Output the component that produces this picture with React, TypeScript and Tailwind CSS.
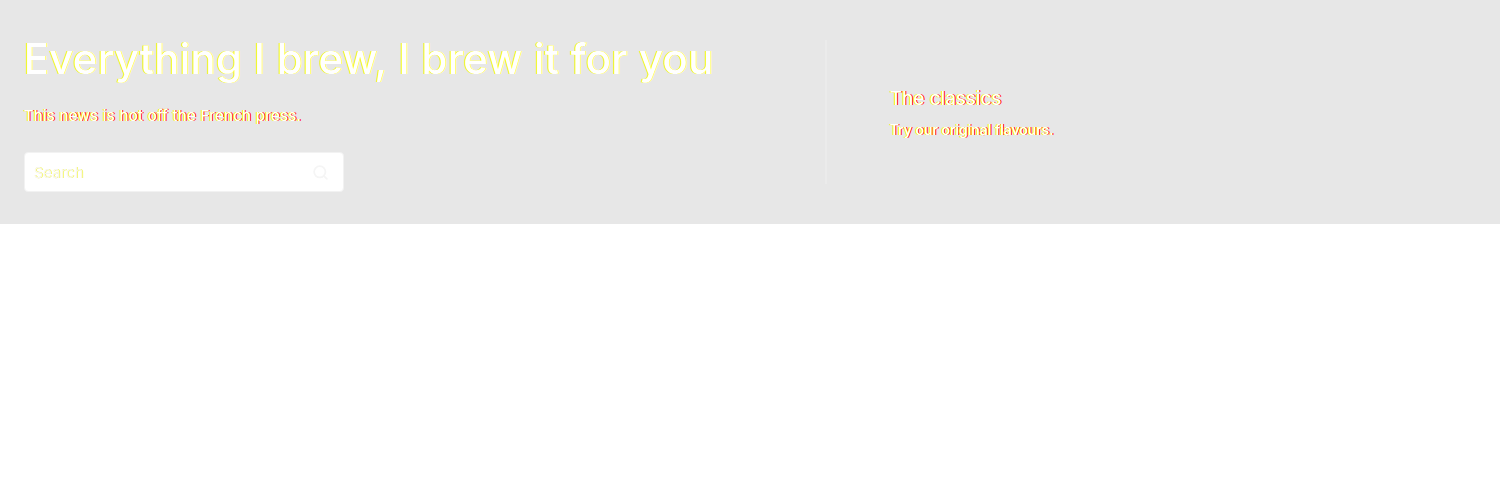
import { Search } from 'lucide-react';

export default function App() {
  return (
    <div className="min-h-[500px] bg-white font-['Inter',sans-serif]">
      <section className="flex h-[224px] bg-[#e7e7e7] px-6 pt-10">
        {/* Left: heading and search */}
        <div className="w-[801px] shrink-0">
          <h1 className="text-[42px] leading-[38px] font-medium tracking-[0.2px] text-white [text-shadow:-1px_0_0_#ffff00,0.5px_0_0_#ffff00]">
            Everything I brew, I brew it for you
          </h1>
          <p className="mt-[28px] text-[15px] leading-5 tracking-[0.3px] text-white [text-shadow:-1px_0_0_#ffff00,1px_0_0_#ff0000]">
            This news is hot off the French press.
          </p>
          <div className="mt-[26px] flex h-10 w-80 items-center justify-between rounded-sm border border-[#f2f2f2] bg-white pr-[14px] pl-[9px]">
            <span className="pt-0.5 text-[15px] text-[#f4f4f4] [text-shadow:0.5px_0_0_#ffff00]">Search</span>
            <Search size={17} strokeWidth={2.5} className="text-[#f5f5f5]" />
          </div>
        </div>

        {/* Right: the classics */}
        <div className="h-[144px] border-l-2 border-[#ebebeb] pt-[47px] pl-[63px]">
          <h2 className="text-[19px] leading-6 text-white [text-shadow:-1px_0_0_#ffff00,1px_0_0_#ff0000]">The classics</h2>
          <p className="mt-[9px] text-sm leading-5 font-medium text-white [text-shadow:-1px_0_0_#ffff00,1px_0_0_#ff0000]">
            Try our original flavours.
          </p>
        </div>
      </section>
    </div>
  );
}
